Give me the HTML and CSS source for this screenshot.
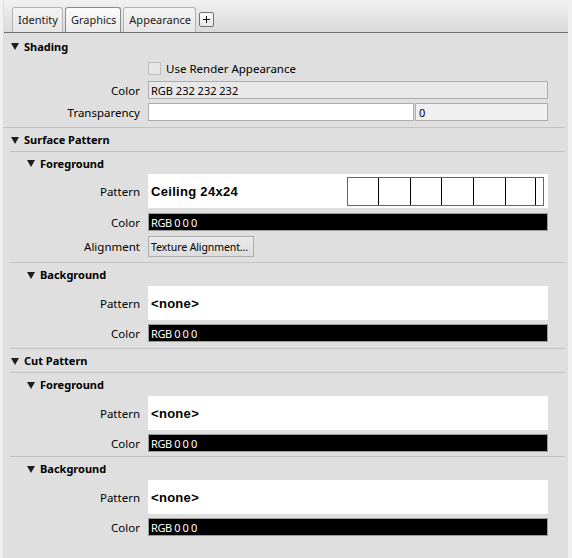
FILE: index.html
```html
<!DOCTYPE html>
<html>
<head>
<meta charset="utf-8">
<link rel="stylesheet" href="styles.css">
</head>
<body>
<div class="panel">
  <div class="tabbar">
    <div class="tab">Identity</div>
    <div class="tab active">Graphics</div>
    <div class="tab">Appearance</div>
    <div class="addtab"><span class="plus-h"></span><span class="plus-v"></span></div>
  </div>

  <div class="section shading">
    <div class="hdr main"><span class="tri"></span><span>Shading</span></div>
    <div class="rows">
      <div class="row r18">
        <div class="label"></div>
        <div class="check"><span class="box"></span><span>Use Render Appearance</span></div>
      </div>
      <div class="row r18">
        <div class="label">Color</div>
        <div class="field gray">RGB 232 232 232</div>
      </div>
      <div class="row r18">
        <div class="label">Transparency</div>
        <div class="split">
          <div class="field white wide"></div>
          <div class="field light narrow">0</div>
        </div>
      </div>
    </div>
  </div>

  <div class="hdr main ruled"><span class="tri"></span><span>Surface Pattern</span></div>

  <div class="section sub">
    <div class="hdr subh first"><span class="tri"></span><span>Foreground</span></div>
    <div class="rows loose">
      <div class="row r34">
        <div class="label">Pattern</div>
        <div class="pattern">
          <span class="pname">Ceiling 24x24</span>
          <svg class="preview" width="197" height="29" viewBox="0 0 197 29">
            <rect x="0.5" y="0.5" width="196" height="28" fill="#fff" stroke="#666"/>
            <g stroke="#000" stroke-width="1">
              <line x1="31.5" y1="1" x2="31.5" y2="28"/>
              <line x1="63.5" y1="1" x2="63.5" y2="28"/>
              <line x1="94.5" y1="1" x2="94.5" y2="28"/>
              <line x1="126.5" y1="1" x2="126.5" y2="28"/>
              <line x1="158.5" y1="1" x2="158.5" y2="28"/>
              <line x1="188.5" y1="1" x2="188.5" y2="28"/>
            </g>
          </svg>
        </div>
      </div>
      <div class="row r18">
        <div class="label">Color</div>
        <div class="field black">RGB 0 0 0</div>
      </div>
      <div class="row r21">
        <div class="label">Alignment</div>
        <div class="btn">Texture Alignment...</div>
      </div>
    </div>
  </div>

  <div class="section sub wide-bottom">
    <div class="hdr subh"><span class="tri"></span><span>Background</span></div>
    <div class="rows">
      <div class="row r34">
        <div class="label">Pattern</div>
        <div class="pattern"><span class="pname">&lt;none&gt;</span></div>
      </div>
      <div class="row r18">
        <div class="label">Color</div>
        <div class="field black">RGB 0 0 0</div>
      </div>
    </div>
  </div>

  <div class="hdr main ruled"><span class="tri"></span><span>Cut Pattern</span></div>

  <div class="section sub tight-bottom">
    <div class="hdr subh"><span class="tri"></span><span>Foreground</span></div>
    <div class="rows">
      <div class="row r34">
        <div class="label">Pattern</div>
        <div class="pattern"><span class="pname">&lt;none&gt;</span></div>
      </div>
      <div class="row r18">
        <div class="label">Color</div>
        <div class="field black">RGB 0 0 0</div>
      </div>
    </div>
  </div>

  <div class="section sub last">
    <div class="hdr subh"><span class="tri"></span><span>Background</span></div>
    <div class="rows">
      <div class="row r34">
        <div class="label">Pattern</div>
        <div class="pattern"><span class="pname">&lt;none&gt;</span></div>
      </div>
      <div class="row r18">
        <div class="label">Color</div>
        <div class="field black">RGB 0 0 0</div>
      </div>
    </div>
  </div>
</div>
</body>
</html>
```
FILE: styles.css
```css
html, body {
  margin: 0;
  padding: 0;
  background: #f0f0f0;
}
body {
  font-family: "Noto Sans", "Open Sans", sans-serif;
  font-size: 11px;
  color: #000;
}
.panel {
  margin-left: 3px;
  width: 565px;
  height: 558px;
  background: #dfdfdf;
  overflow: hidden;
}
.tabbar {
  height: 32px;
  border-bottom: 1px solid #6f6f6f;
  background: linear-gradient(#f1f1f1, #dadada);
  display: flex;
  align-items: flex-end;
  gap: 2px;
  padding-left: 8px;
  margin-left: 1px;
}
.tab {
  height: 25px;
  box-sizing: border-box;
  border: 1px solid #b4b4b4;
  border-bottom: none;
  border-radius: 3px 3px 0 0;
  background: linear-gradient(#f3f3f3, #e6e6e6);
  padding: 0 4px 1px 5px;
  display: flex;
  align-items: center;
  font-size: 11px;
  color: #1a1a1a;
  white-space: nowrap;
}
.tab.active {
  border-color: #8a8a8a;
  background: linear-gradient(#fbfbfb, #ececec);
}
.addtab {
  width: 15px;
  height: 15px;
  box-sizing: border-box;
  border: 1px solid #707070;
  border-radius: 2px;
  background: linear-gradient(#fbfbfb, #e8e8e8);
  margin: 0 0 5px 1px;
  position: relative;
}
.plus-h {
  position: absolute;
  left: 3px;
  top: 6px;
  width: 7px;
  height: 1px;
  background: #111;
}
.plus-v {
  position: absolute;
  left: 6px;
  top: 3px;
  width: 1px;
  height: 7px;
  background: #111;
}
.hdr {
  display: flex;
  align-items: center;
  font-weight: bold;
  gap: 5px;
}
.hdr.main {
  height: 23px;
  padding-left: 8px;
}
.shading .hdr.main {
  height: 26px;
}
.hdr.ruled {
  border-bottom: 1px solid #c2c2c2;
  margin-left: 7px;
  margin-right: 3px;
  padding-left: 1px;
}
.hdr.subh {
  height: 23px;
  padding-left: 17px;
}
.hdr.subh.first {
  height: 22px;
}
.tri {
  width: 0;
  height: 0;
  border-left: 4.5px solid transparent;
  border-right: 4.5px solid transparent;
  border-top: 7px solid #1e1e1e;
  margin-top: 1px;
}
.section {
  border-bottom: 1px solid #c2c2c2;
  margin-right: 3px;
}
.section.shading {
  padding-bottom: 6px;
}
.section.sub {
  padding-bottom: 5px;
  margin-left: 7px;
}
.section.sub.wide-bottom {
  padding-bottom: 6px;
}
.section.sub.tight-bottom {
  padding-bottom: 4px;
}
.section.sub .label {
  width: 130px;
}
.section.last {
  border-bottom: none;
}
.rows {
  display: flex;
  flex-direction: column;
  gap: 4px;
}
.rows.loose {
  gap: 5px;
}
.row {
  display: flex;
  align-items: center;
  gap: 8px;
}
.r18 { height: 18px; }
.r21 { height: 21px; }
.r34 { height: 34px; }
.label {
  width: 137px;
  text-align: right;
  flex: none;
  font-size: 11.5px;
}
.check {
  display: flex;
  align-items: center;
  gap: 5px;
  font-size: 11.5px;
}
.box {
  width: 13px;
  height: 13px;
  box-sizing: border-box;
  border: 1px solid #bcbcbc;
  background: #e6e6e6;
}
.field {
  box-sizing: border-box;
  height: 18px;
  width: 400px;
  border: 1px solid #adadad;
  padding-left: 2px;
  display: flex;
  align-items: center;
  font-size: 11px;
}
.field.gray { background: #e8e8e8; }
.field.white { background: #fff; }
.field.light { background: #f0f0f0; padding-left: 3px; }
.split {
  display: flex;
  gap: 1px;
}
.field.wide { width: 266px; }
.field.narrow { width: 133px; }
.field.black {
  background: #000;
  color: #fff;
  border-color: #9c9c9c;
  font-size: 11px;
  letter-spacing: -0.4px;
}
.pattern {
  width: 400px;
  height: 34px;
  background: #fff;
  display: flex;
  align-items: center;
  justify-content: space-between;
  padding-left: 3px;
  padding-right: 4px;
  box-sizing: border-box;
}
.pname {
  font-family: "Liberation Sans", Arial, sans-serif;
  font-weight: bold;
  font-size: 13px;
  letter-spacing: 0.3px;
}
.preview {
  display: block;
}
.btn {
  box-sizing: border-box;
  height: 21px;
  width: 106px;
  border: 1px solid #adadad;
  background: linear-gradient(#eaeaea, #dcdcdc);
  display: flex;
  align-items: center;
  padding-left: 2px;
  font-size: 10.5px;
  letter-spacing: -0.1px;
  white-space: nowrap;
  overflow: hidden;
}
```
